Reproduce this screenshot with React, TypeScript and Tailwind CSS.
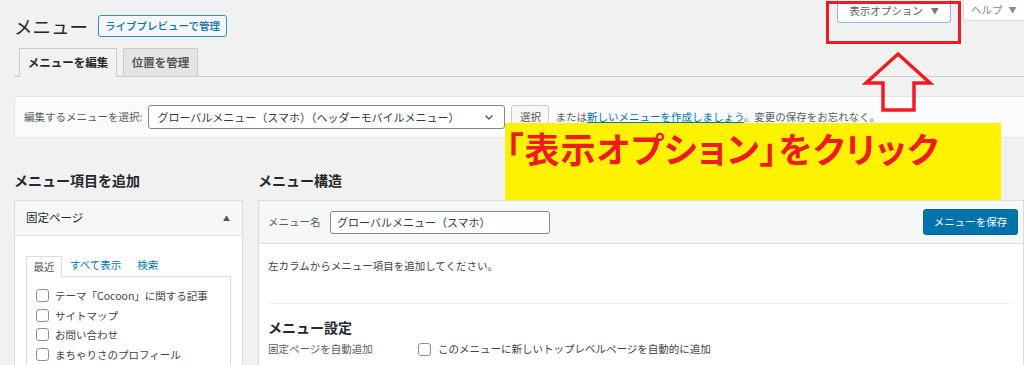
import React from "react";

const recentPages = [
  "テーマ「Cocoon」に関する記事",
  "サイトマップ",
  "お問い合わせ",
  "まちゃりさのプロフィール",
];

function Checkbox() {
  return <span className="inline-block w-[13px] h-[13px] shrink-0 rounded-[3px] border border-[#8c8f94] bg-white" />;
}

export default function App() {
  return (
    <div className="relative w-[1024px] h-[365px] overflow-hidden bg-[#f1f1f1] text-[#23282d] font-['Noto_Sans_CJK_JP','Noto_Sans',sans-serif]">
      {/* Header row */}
      <div className="flex h-[48px]">
        <div className="flex items-center gap-[10px] pl-[14px] pt-[15px] h-[37px]">
          <h1 className="text-[18.5px] leading-[22px] font-normal text-[#23282d]">メニュー</h1>
          <span className="flex items-center h-[22px] px-[6px] rounded-[3px] border border-[#2e8ec0] bg-[#f6f7f7] text-[10.5px] font-medium text-[#0071a1]">
            ライブプレビューで管理
          </span>
        </div>
        <div className="ml-auto flex gap-[12px] items-start">
          <span className="flex items-center justify-center gap-[8px] w-[114px] h-[23px] bg-white border border-t-0 border-[#8bbcdc] rounded-b-[3px] text-[10.5px] text-[#555d66]">
            表示オプション
            <span className="text-[8px] text-[#72777c]">▼</span>
          </span>
          <span className="flex items-center gap-[6px] w-[61px] h-[21px] pl-[7px] bg-white border border-t-0 border-r-0 border-[#dcdcde] rounded-bl-[3px] text-[10.5px] text-[#868b90]">
            ヘルプ
            <span className="text-[8px] text-[#868b90]">▼</span>
          </span>
        </div>
      </div>

      {/* Nav tabs */}
      <div className="ml-[14px] flex items-end gap-[6px] h-[29px] pl-[5px] border-b border-[#ccc]">
        <span className="flex items-center justify-center w-[98px] h-[29px] mb-[-1px] border border-b-0 border-[#ccc] bg-[#f1f1f1] text-[11.5px] font-bold text-[#23282d]">
          メニューを編集
        </span>
        <span className="flex items-center justify-center w-[75px] h-[28px] border border-b-0 border-[#ccc] bg-[#e5e5e5] text-[11.5px] font-bold text-[#555]">
          位置を管理
        </span>
      </div>

      {/* Manage menus */}
      <div className="ml-[14px] mt-[19px] w-[1030px] h-[42px] flex items-center gap-[6px] pl-[9px] border border-[#e2e4e7] bg-[#fbfbfb] text-[10.5px] text-[#555d66]">
        <span>編集するメニューを選択:</span>
        <span className="flex items-center justify-between w-[357px] h-[24px] px-[8px] rounded-[3px] border border-[#7e8993] bg-white text-[11px] text-[#32373c]">
          グローバルメニュー（スマホ）（ヘッダーモバイルメニュー）
          <svg width="10" height="10" viewBox="0 0 10 10" className="mr-[2px]">
            <path d="M1.5 3.5 L5 7 L8.5 3.5" fill="none" stroke="#555" strokeWidth="1.4" />
          </svg>
        </span>
        <span className="flex items-center justify-center w-[38px] h-[24px] rounded-[3px] border border-[#ccc] bg-[#f7f7f7] text-[10.5px] text-[#555]">
          選択
        </span>
        <span>
          または<span className="text-[#0073aa] underline">新しいメニューを作成しましょう</span>。変更の保存をお忘れなく。
        </span>
      </div>

      {/* Columns */}
      <div className="ml-[14px] mt-[32px] flex gap-[15px]">
        <div className="w-[229px] shrink-0">
          <h2 className="h-[20px] leading-[20px] text-[14px] font-bold text-[#23282d]">メニュー項目を追加</h2>
          <div className="mt-[10px] border border-[#dcdcde] bg-white h-[200px]">
            <div className="flex items-center justify-between h-[35px] px-[11px] bg-[#f6f7f7] border-b border-[#e5e5e5]">
              <span className="text-[11.5px] text-[#23282d]">固定ページ</span>
              <span className="text-[7px] text-[#555] mr-[1px]">▲</span>
            </div>
            <div className="px-[11px] pt-[20px]">
              <div className="flex items-end h-[20px] text-[10.5px]">
                <span className="flex items-center justify-center w-[36px] h-[21px] mb-[-1px] border border-b-0 border-[#dcdcde] bg-white text-[#555] relative z-10">
                  最近
                </span>
                <span className="ml-[8px] mr-[16px] pb-[3px] text-[#0073aa]">すべて表示</span>
                <span className="pb-[3px] text-[#0073aa]">検索</span>
              </div>
              <div className="border border-[#dcdcde] h-[100px] pl-[9px] pt-[12px] flex flex-col gap-[6.5px] text-[10.5px] text-[#3c434a]">
                {recentPages.map((p) => (
                  <label key={p} className="flex items-center gap-[6px] h-[13px]">
                    <Checkbox />
                    <span className="leading-[13px]">{p}</span>
                  </label>
                ))}
              </div>
            </div>
          </div>
        </div>

        <div className="w-[766px] shrink-0">
          <h2 className="h-[20px] leading-[20px] text-[14px] font-bold text-[#23282d]">メニュー構造</h2>
          <div className="mt-[10px] border border-[#dcdcde] bg-white h-[200px]">
            <div className="flex items-center h-[43px] pl-[9px] pr-[5px] bg-[#f6f7f7] border-b border-[#dcdcde]">
              <span className="text-[10.5px] text-[#555d66] w-[62px]">メニュー名</span>
              <span className="flex items-center w-[220px] h-[23px] px-[6px] rounded-[3px] border border-[#7e8993] bg-white text-[11px] text-[#32373c]">
                グローバルメニュー（スマホ）
              </span>
              <span className="ml-auto flex items-center justify-center w-[95px] h-[26px] rounded-[3px] bg-[#0073aa] border border-[#006799] text-[10.5px] text-white">
                メニューを保存
              </span>
            </div>
            <div className="px-[9px] pt-[14px]">
              <p className="text-[10.5px] leading-[16px] text-[#3c434a]">左カラムからメニュー項目を追加してください。</p>
              <div className="mt-[29px] border-t border-[#eee] mr-[4px]" />
              <h3 className="mt-[13px] h-[20px] leading-[20px] text-[14px] font-bold text-[#23282d]">メニュー設定</h3>
              <div className="mt-[5px] flex items-center h-[14px] text-[10.5px]">
                <span className="w-[150px] text-[#555d66]">固定ページを自動追加</span>
                <Checkbox />
                <span className="ml-[7px] text-[#3c434a]">このメニューに新しいトップレベルページを自動的に追加</span>
              </div>
            </div>
          </div>
        </div>
      </div>

      {/* Annotation overlays */}
      <div className="absolute left-[826px] top-[1px] w-[135px] h-[43px] border-[3px] border-[#ed1c24]" />
      <svg className="absolute left-[862px] top-[50px]" width="72" height="64" viewBox="0 0 72 64">
        <path
          d="M36 4 L68 33 L52 33 L52 60 L21 60 L21 33 L4 33 Z"
          fill="none"
          stroke="#ed1c24"
          strokeWidth="3.5"
          strokeLinejoin="miter"
        />
      </svg>
      <div className="absolute left-[505px] top-[123px] w-[496px] h-[77px] bg-[#fff200]">
        <p className="pl-[1px] pt-[3px] text-[35px] leading-[44px] font-bold text-[#ed1c24] [font-feature-settings:'palt'] tracking-[1px]">
          「表示オプション」をクリック
        </p>
      </div>
    </div>
  );
}
